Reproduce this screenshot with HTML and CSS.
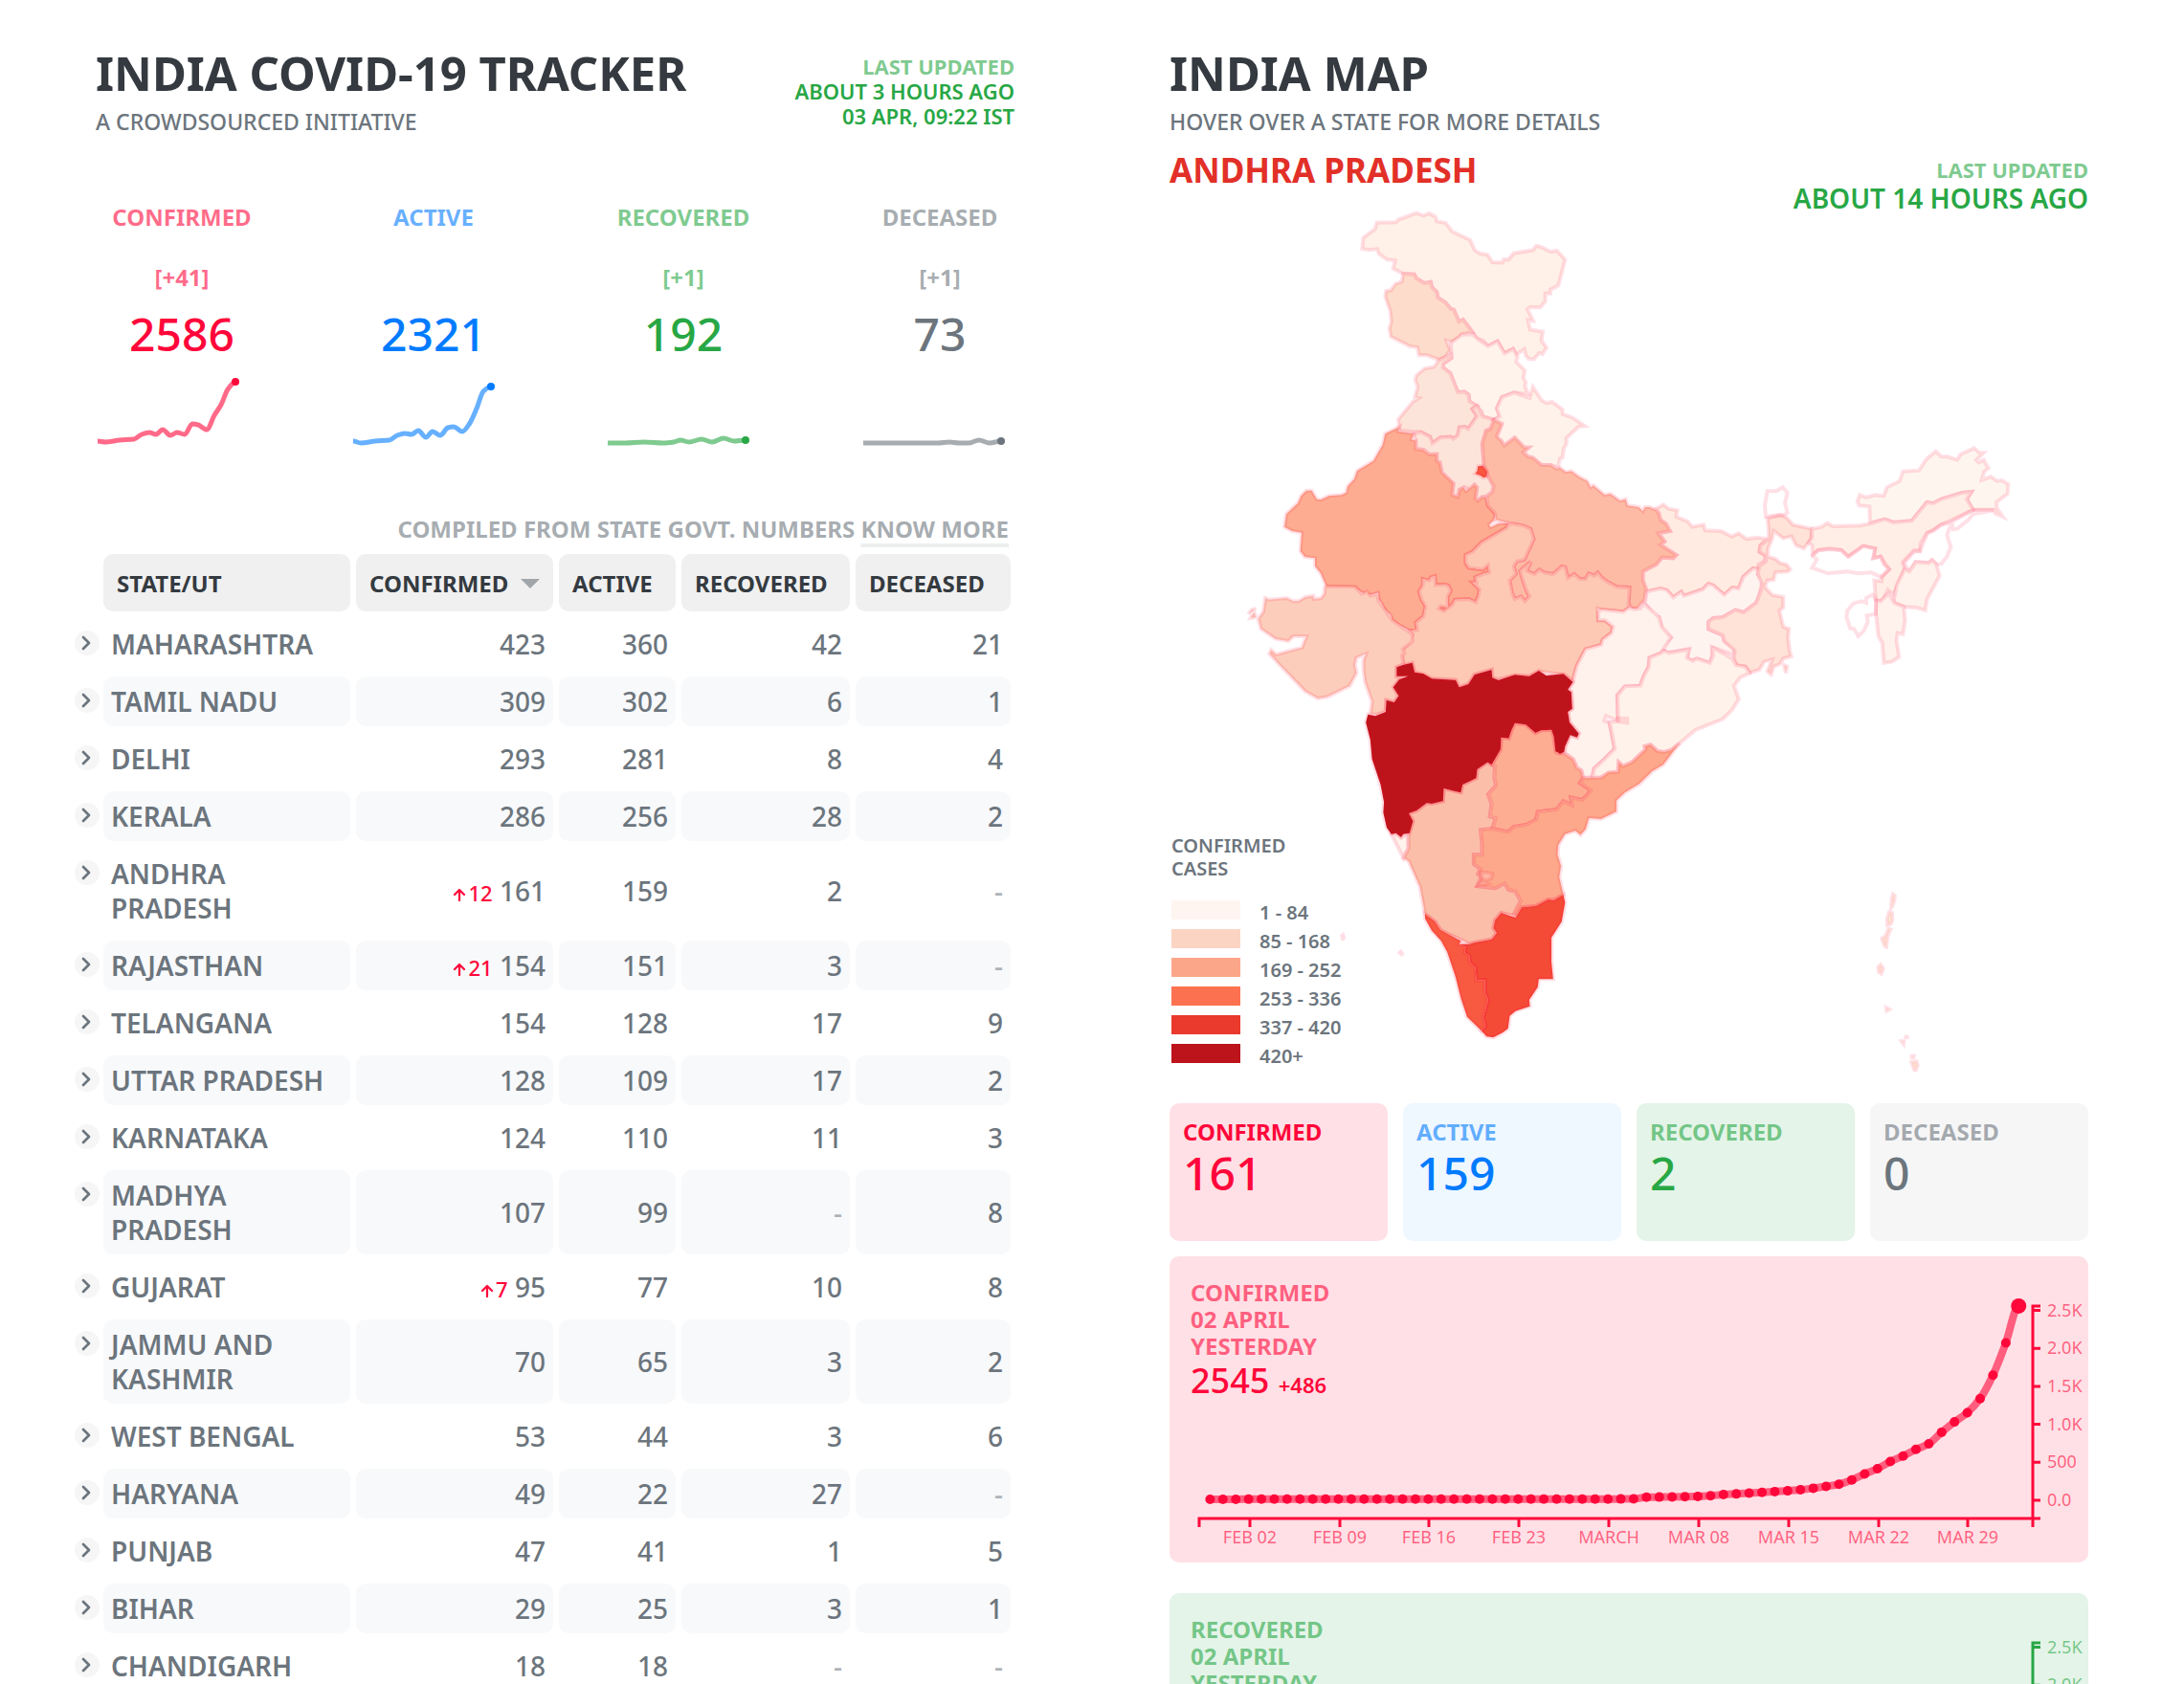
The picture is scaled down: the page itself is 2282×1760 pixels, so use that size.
FILE: index.html
```html
<!DOCTYPE html>
<html lang="en">
<head>
<meta charset="utf-8">
<title>India COVID-19 Tracker</title>
<link rel="stylesheet" href="styles.css">
</head>
<body>
<svg class="symbols" aria-hidden="true">
  <symbol id="chevron" viewBox="0 0 26 26"><path d="M9 7l6 6-6 6" fill="none" stroke="#6c757d" stroke-width="2.7" stroke-linecap="round" stroke-linejoin="round"/></symbol>
  <symbol id="up" viewBox="0 0 14 14"><path d="M7 13V2M2 7l5-5 5 5" fill="none" stroke="#ff073a" stroke-width="2.2" stroke-linecap="round" stroke-linejoin="round"/></symbol>
</svg>
<main class="page">
  <section class="column">
    <header class="head">
      <div>
        <h1 class="title">INDIA COVID-19 TRACKER</h1>
        <p class="subtitle">A CROWDSOURCED INITIATIVE</p>
      </div>
      <div class="updated">
        <p class="updated-label">LAST UPDATED</p>
        <p>ABOUT 3 HOURS AGO</p>
        <p>03 APR, 09:22 IST</p>
      </div>
    </header>

    <div class="stats">
      <div class="stat red"><h2 class="stat-label">CONFIRMED</h2><p class="stat-delta">[+41]</p><p class="stat-value">2586</p></div>
      <div class="stat blue"><h2 class="stat-label">ACTIVE</h2><p class="stat-delta"></p><p class="stat-value">2321</p></div>
      <div class="stat green"><h2 class="stat-label">RECOVERED</h2><p class="stat-delta">[+1]</p><p class="stat-value">192</p></div>
      <div class="stat gray"><h2 class="stat-label">DECEASED</h2><p class="stat-delta">[+1]</p><p class="stat-value">73</p></div>
    </div>

    <div class="sparks">
      <svg class="spark red" viewBox="0 0 160 90" data-points="2,76 10,77 25,75 40,74 48,69 56,67 63,69 70,64 78,70 85,67 93,69 101,58 107,59 116,64 124,49 131,38 138,22 146,14"></svg>
      <svg class="spark blue" viewBox="0 0 160 90" data-points="2,76 10,78 25,76 40,75 48,70 56,68 63,69 70,65 78,72 85,66 93,70 101,62 107,61 116,66 124,57 131,42 138,24 146,19"></svg>
      <svg class="spark green" viewBox="0 0 160 90" data-points="2,78 20,78 40,77 60,78 71,77 78,75 87,77 100,74 111,77 123,73 134,76 146,75"></svg>
      <svg class="spark gray" viewBox="0 0 160 90" data-points="2,78 30,78 60,78 80,78 92,77 102,78 112,78 123,75 134,78 146,76"></svg>
    </div>

    <p class="note">COMPILED FROM STATE GOVT. NUMBERS <a href="#sources">KNOW MORE</a></p>

    <table class="states">
      <colgroup><col class="c-toggle"><col><col class="c-confirmed"><col class="c-active"><col class="c-recovered"><col class="c-deceased"></colgroup>
      <thead>
        <tr><td></td><th scope="col"><button>STATE/UT</button></th><th scope="col"><button>CONFIRMED<span class="sort"></span></button></th><th scope="col"><button>ACTIVE</button></th><th scope="col"><button>RECOVERED</button></th><th scope="col"><button>DECEASED</button></th></tr>
      </thead>
      <tbody>
        <tr><td class="toggle"><button aria-label="Show districts"><svg><use href="#chevron"/></svg></button></td><th scope="row">MAHARASHTRA</th><td>423</td><td>360</td><td>42</td><td>21</td></tr>
        <tr><td class="toggle"><button aria-label="Show districts"><svg><use href="#chevron"/></svg></button></td><th scope="row">TAMIL NADU</th><td>309</td><td>302</td><td>6</td><td>1</td></tr>
        <tr><td class="toggle"><button aria-label="Show districts"><svg><use href="#chevron"/></svg></button></td><th scope="row">DELHI</th><td>293</td><td>281</td><td>8</td><td>4</td></tr>
        <tr><td class="toggle"><button aria-label="Show districts"><svg><use href="#chevron"/></svg></button></td><th scope="row">KERALA</th><td>286</td><td>256</td><td>28</td><td>2</td></tr>
        <tr><td class="toggle"><button aria-label="Show districts"><svg><use href="#chevron"/></svg></button></td><th scope="row">ANDHRA PRADESH</th><td><span class="rise"><svg><use href="#up"/></svg>12</span> 161</td><td>159</td><td>2</td><td class="none">-</td></tr>
        <tr><td class="toggle"><button aria-label="Show districts"><svg><use href="#chevron"/></svg></button></td><th scope="row">RAJASTHAN</th><td><span class="rise"><svg><use href="#up"/></svg>21</span> 154</td><td>151</td><td>3</td><td class="none">-</td></tr>
        <tr><td class="toggle"><button aria-label="Show districts"><svg><use href="#chevron"/></svg></button></td><th scope="row">TELANGANA</th><td>154</td><td>128</td><td>17</td><td>9</td></tr>
        <tr><td class="toggle"><button aria-label="Show districts"><svg><use href="#chevron"/></svg></button></td><th scope="row">UTTAR PRADESH</th><td>128</td><td>109</td><td>17</td><td>2</td></tr>
        <tr><td class="toggle"><button aria-label="Show districts"><svg><use href="#chevron"/></svg></button></td><th scope="row">KARNATAKA</th><td>124</td><td>110</td><td>11</td><td>3</td></tr>
        <tr><td class="toggle"><button aria-label="Show districts"><svg><use href="#chevron"/></svg></button></td><th scope="row">MADHYA PRADESH</th><td>107</td><td>99</td><td class="none">-</td><td>8</td></tr>
        <tr><td class="toggle"><button aria-label="Show districts"><svg><use href="#chevron"/></svg></button></td><th scope="row">GUJARAT</th><td><span class="rise"><svg><use href="#up"/></svg>7</span> 95</td><td>77</td><td>10</td><td>8</td></tr>
        <tr><td class="toggle"><button aria-label="Show districts"><svg><use href="#chevron"/></svg></button></td><th scope="row">JAMMU AND KASHMIR</th><td>70</td><td>65</td><td>3</td><td>2</td></tr>
        <tr><td class="toggle"><button aria-label="Show districts"><svg><use href="#chevron"/></svg></button></td><th scope="row">WEST BENGAL</th><td>53</td><td>44</td><td>3</td><td>6</td></tr>
        <tr><td class="toggle"><button aria-label="Show districts"><svg><use href="#chevron"/></svg></button></td><th scope="row">HARYANA</th><td>49</td><td>22</td><td>27</td><td class="none">-</td></tr>
        <tr><td class="toggle"><button aria-label="Show districts"><svg><use href="#chevron"/></svg></button></td><th scope="row">PUNJAB</th><td>47</td><td>41</td><td>1</td><td>5</td></tr>
        <tr><td class="toggle"><button aria-label="Show districts"><svg><use href="#chevron"/></svg></button></td><th scope="row">BIHAR</th><td>29</td><td>25</td><td>3</td><td>1</td></tr>
        <tr><td class="toggle"><button aria-label="Show districts"><svg><use href="#chevron"/></svg></button></td><th scope="row">CHANDIGARH</th><td>18</td><td>18</td><td class="none">-</td><td class="none">-</td></tr>
      </tbody>
    </table>
  </section>

  <section class="column">
    <header class="head">
      <div>
        <h1 class="title">INDIA MAP</h1>
        <p class="subtitle">HOVER OVER A STATE FOR MORE DETAILS</p>
      </div>
    </header>
    <div class="map-head">
      <h2 class="state-name">ANDHRA PRADESH</h2>
      <div class="map-updated">
        <p class="updated-label">LAST UPDATED</p>
        <p class="map-time">ABOUT 14 HOURS AGO</p>
      </div>
    </div>

    <div class="map">
      <svg class="map-svg" viewBox="-174 60 2880 2730" role="img" aria-label="Confirmed cases by state">
        <g class="northeast" transform="translate(1260 720)">
          <path fill="#ffebe1" d="M90,275 115,262 130,275 158,280 155,300 190,315 205,332 240,325 245,343 295,345 328,362 350,352 375,370 410,365 438,370 418,390 415,410 435,422 430,440 412,450 412,465 395,462 365,488 350,525 330,522 305,545 270,515 255,510 238,528 178,548 170,535 145,553 125,530 105,525 62,535 50,500 50,472 92,450 110,428 145,430 155,420 105,388 118,378 98,352 135,345 122,322 105,310 100,290Z"/>
          <path fill="#fff3ef" d="M62,535 105,525 125,530 145,553 170,535 178,548 238,528 255,510 270,515 305,545 330,522 350,525 365,488 395,462 412,465 410,480 425,500 415,545 405,570 365,600 340,592 300,615 270,618 255,630 255,652 300,672 305,690 335,712 338,735 270,710 262,760 220,745 200,752 188,742 193,715 130,727 105,715 137,680 110,655 100,615 88,615 55,570 60,550Z"/>
          <path fill="#ffe2d8" d="M440,305 480,295 500,302 520,325 578,338 578,370 568,382 555,400 530,390 515,362 490,368 460,345 455,370 442,400 442,425 465,432 480,445 500,450 512,465 505,472 465,475 460,498 440,500 432,520 455,545 490,552 490,585 478,595 490,645 508,652 505,680 510,720 515,738 490,745 480,762 460,770 452,795 440,785 455,748 430,755 415,780 385,790 370,770 345,768 335,745 338,720 305,690 300,672 255,652 255,630 270,618 300,615 340,592 365,600 405,570 415,545 425,515 410,480 415,455 435,440 435,422 415,410 418,390 445,370 443,330ZM492,765 502,770 498,790Z"/>
          <path fill="none" d="M440,220 468,220 488,208 503,225 495,258 503,288 490,295 475,295 435,300 432,265Z"/>
          <path fill="#fff5ef" d="M730,232 750,240 778,232 805,235 815,208 855,188 865,158 915,155 940,118 968,95 985,112 1005,112 1035,122 1045,105 1088,85 1105,100 1118,100 1095,122 1103,130 1118,122 1133,148 1120,158 1112,185 1140,175 1160,188 1175,186 1195,198 1193,228 1158,255 1160,275 1178,300 1155,290 1150,278 1085,278 1065,245 1080,222 1050,225 985,245 960,258 940,255 893,313 835,318 808,308 762,320 760,268 728,265 722,252Z"/>
          <path fill="#ffeee6" d="M580,338 610,332 628,320 645,330 730,328 762,322 808,308 835,318 893,313 940,255 960,258 985,245 1050,225 1080,222 1065,245 1085,278 1015,312 985,325 960,345 940,350 920,385 918,408 900,405 865,442 870,465 855,500 835,545 818,530 800,565 780,562 775,500 798,502 798,488 822,465 805,450 795,425 772,430 778,400 740,392 730,400 695,425 672,405 635,400 600,405 582,420 580,390 570,382 580,365Z"/>
          <path fill="none" d="M1018,315 1022,340 1035,338 1070,310 1085,292 1150,280 1085,280ZM1018,318 1003,358 1015,395 1003,425 985,448 970,450 955,435 945,445 905,442 885,472 868,445 900,410 918,408 942,352 985,325Z"/>
          <path fill="#fff1eb" d="M885,472 905,442 945,445 957,437 970,450 980,485 940,560 935,593 905,585 870,583 835,570 845,515 870,465Z"/>
          <path fill="#fff1ec" d="M795,565 820,540 838,570 868,583 872,625 865,668 848,665 845,690 853,740 830,755 805,758 800,695 788,675 780,600 782,565Z"/>
          <path fill="none" d="M780,560 770,545 750,555 750,570 735,565 710,572 690,595 688,615 700,650 712,652 725,675 742,658 755,630 752,610 780,605Z"/>
          <path fill="none" d="M582,420 600,405 635,402 672,405 692,425 740,392 778,400 772,430 795,425 822,465 798,490 765,475 725,478 690,472 630,478 580,460 595,435Z"/>
        </g>
        <g class="north">
          <path fill="#fff0e8" d="M433,146 470,118 476,98 535,97 545,88 600,68 622,76 640,69 660,80 664,94 692,99 712,126 768,152 783,185 800,195 823,199 838,222 870,223 874,213 888,214 905,194 965,184 976,171 990,174 1020,189 1040,186 1066,214 1045,295 1020,308 1020,320 1004,320 1004,345 988,364 957,363 948,370 966,406 950,404 956,433 996,440 992,468 1008,490 995,510 985,507 968,526 952,525 943,515 938,495 912,512 903,494 876,508 854,470 824,485 808,467 790,462 776,442 746,402 733,408 717,371 708,369 690,348 667,333 664,316 648,300 645,284 625,288 600,273 593,260 558,258 527,242 533,217 508,214 482,196 477,181 452,184 430,180Z"/>
          <path fill="#fddccc" d="M558,258 593,260 600,273 625,288 645,284 648,300 664,316 667,333 690,348 708,369 717,371 733,408 746,402 776,442 742,447 733,460 712,472 694,468 706,498 690,520 670,528 632,514 608,514 603,489 580,486 520,456 515,430 521,410 518,375 502,330 505,312 520,310 534,290 554,283Z"/>
          <path fill="#fff3ec" d="M742,450 776,448 790,462 824,485 854,470 876,508 903,494 917,520 913,535 940,562 935,583 943,600 940,610 950,635 906,631 868,645 852,680 861,706 843,716 808,706 805,690 785,672 766,658 764,638 750,628 730,630 706,570 683,552 684,540 710,522 708,478 712,472Z"/>
          <path fill="#fde4da" d="M670,530 708,510 710,522 684,540 683,552 706,570 730,630 750,628 764,638 766,658 790,672 775,682 790,705 762,745 752,738 735,740 730,765 715,776 708,770 675,772 650,790 643,770 615,755 547,750 543,715 588,660 607,648 595,645 604,613 596,590 600,577 625,556 655,550Z"/>
          <path fill="#fde4da" d="M592,760 615,755 643,770 650,790 675,772 708,770 715,776 730,765 735,740 752,738 762,745 790,705 775,682 790,672 808,706 843,716 832,745 818,750 806,792 812,860 822,878 826,895 842,925 838,942 820,955 806,958 793,970 785,962 790,928 782,920 766,940 755,928 748,928 735,935 730,958 712,952 716,918 680,882 673,848 664,845 664,824 640,825 624,810 598,808 598,782Z"/>
          <path fill="#fff2ea" d="M843,716 861,706 852,680 868,645 906,631 955,648 965,613 992,655 1008,664 1025,660 1058,684 1058,698 1090,710 1128,736 1108,738 1070,773 1070,792 1062,805 1058,835 1050,838 1044,865 1020,858 992,858 965,835 950,832 935,818 952,803 938,803 908,772 875,797 866,782 855,780 852,768 868,728Z"/>
          <path fill="#fdac91" d="M547,738 543,753 592,760 585,778 598,782 598,808 620,810 640,825 664,824 664,845 673,850 680,882 716,915 712,952 730,958 735,935 748,928 755,940 782,920 790,928 785,962 793,970 806,958 818,960 824,985 848,1012 842,1033 828,1045 833,1053 856,1042 890,1040 882,1055 805,1100 775,1130 754,1140 754,1165 764,1180 808,1186 824,1172 828,1195 812,1198 784,1210 788,1226 775,1226 798,1248 794,1268 786,1288 764,1278 720,1280 712,1296 686,1316 670,1308 676,1300 698,1304 698,1270 708,1252 700,1236 688,1232 660,1234 658,1206 645,1210 640,1220 620,1215 620,1235 608,1255 616,1280 628,1300 622,1332 598,1352 602,1375 580,1378 550,1362 524,1345 520,1330 500,1310 490,1290 482,1280 480,1258 455,1266 428,1258 408,1242 318,1240 300,1198 282,1175 282,1150 250,1146 236,1128 240,1070 210,1065 186,1052 192,1012 228,978 238,955 255,938 272,938 288,965 300,967 325,955 365,952 380,944 384,925 405,902 414,876 465,845 494,795 502,760Z"/>
          <path fill="#fdbba5" d="M843,716 868,730 852,768 866,782 875,797 908,772 938,803 952,803 935,818 950,832 965,835 992,858 1020,858 1040,870 1050,866 1068,880 1086,877 1110,895 1136,908 1146,928 1155,922 1190,952 1208,948 1238,970 1256,965 1262,985 1297,990 1310,1003 1316,990 1332,990 1352,1000 1360,1010 1365,1030 1382,1042 1395,1065 1358,1072 1378,1098 1365,1108 1415,1140 1405,1150 1370,1148 1352,1170 1310,1192 1310,1220 1320,1245 1315,1280 1292,1308 1278,1308 1265,1295 1268,1242 1228,1240 1195,1222 1180,1210 1168,1195 1158,1205 1140,1198 1130,1215 1112,1215 1095,1200 1075,1212 1066,1178 1056,1176 1028,1200 1000,1195 985,1186 970,1200 946,1190 958,1162 935,1180 925,1190 932,1215 942,1245 954,1270 940,1285 928,1270 908,1278 900,1260 892,1220 912,1200 905,1175 915,1160 938,1155 968,1090 958,1058 935,1048 900,1042 848,1030 848,1012 824,985 820,958 838,942 842,925 826,895 812,860 806,792 818,750 832,745Z"/>
          <path fill="#fdc9b4" d="M890,1045 900,1042 935,1048 958,1058 968,1090 938,1155 915,1160 905,1175 912,1200 892,1220 900,1260 908,1278 928,1270 940,1285 954,1270 942,1245 932,1215 925,1190 935,1180 958,1162 946,1190 970,1200 985,1186 1000,1195 1028,1200 1056,1176 1066,1178 1075,1212 1095,1200 1112,1215 1130,1215 1140,1198 1158,1205 1168,1195 1180,1210 1195,1222 1228,1240 1268,1242 1265,1295 1268,1304 1250,1318 1179,1311 1168,1308 1170,1345 1190,1345 1216,1365 1211,1385 1184,1405 1179,1422 1130,1435 1104,1485 1095,1515 1091,1535 1061,1515 984,1505 954,1520 909,1518 857,1530 836,1525 836,1500 782,1515 763,1545 734,1555 723,1532 648,1528 595,1508 587,1480 560,1487 552,1440 579,1412 587,1390 580,1378 602,1375 598,1352 622,1332 628,1300 616,1280 608,1255 620,1235 620,1215 640,1220 645,1210 658,1206 660,1234 688,1232 700,1236 708,1252 698,1270 698,1304 676,1300 670,1308 686,1316 712,1296 720,1280 764,1278 786,1288 794,1268 798,1248 775,1226 788,1226 784,1210 812,1198 828,1195 824,1172 808,1186 764,1180 754,1165 754,1140 775,1130 805,1100 882,1055Z"/>
          <path fill="#f85740" d="M793,862 808,860 822,878 820,895 810,898 802,892 784,885 790,878Z"/>
        </g>
        <g class="south" transform="translate(0 1200) scale(1.0714 1)">
          <path fill="#fff1eb" d="M1182,105 1165,118 1100,111 1092,120 1092,145 1112,145 1135,165 1130,185 1105,205 1100,222 1055,235 1030,285 1022,315 1018,338 1003,362 1013,370 1016,422 1003,432 1008,465 1035,500 1030,512 1010,505 995,540 992,560 1018,580 1030,608 1042,615 1048,640 1075,635 1080,610 1110,580 1140,548 1130,490 1125,465 1110,460 1115,445 1150,460 1148,380 1170,352 1215,350 1225,320 1240,290 1242,262 1275,248 1305,198 1278,165 1270,135 1225,92 1215,108 1198,110Z"/>
          <path fill="#fff2ea" d="M1283,240 1300,247 1358,236 1352,262 1368,272 1380,265 1418,278 1428,255 1425,230 1460,250 1484,265 1495,285 1522,290 1535,310 1507,325 1489,350 1503,392 1484,425 1456,455 1377,488 1330,530 1305,552 1285,558 1265,555 1245,535 1228,540 1230,550 1205,575 1190,590 1165,602 1152,590 1150,620 1122,622 1100,638 1075,635 1080,610 1110,580 1140,548 1130,490 1125,465 1150,460 1148,380 1170,352 1215,350 1225,320 1240,290 1242,262 1275,248Z"/>
          <path fill="none" d="M1150,452 1176,453 1176,466 1150,462Z"/>
          <path fill="#fdcdbb" d="M292,42 298,38 380,40 400,62 415,55 425,68 445,62 450,85 470,115 490,145 515,165 540,182 548,190 548,212 520,235 525,250 518,255 522,282 502,292 502,320 530,318 510,330 495,355 508,382 495,402 472,395 470,430 445,440 425,438 430,400 410,340 405,300 405,270 412,250 385,262 380,285 385,310 365,350 300,385 272,390 235,368 160,285 130,250 135,238 150,252 225,230 238,195 200,195 185,210 148,203 105,172 97,140 112,118 118,75 128,80 180,75 200,85 215,85 235,72 258,68 260,78 280,76 290,62ZM68,125 78,112 90,108ZM75,138 85,120 90,135Z"/>
          <path fill="#fff3ec" d="M487,816 500,812 515,825 535,815 537,860 522,890Z"/>
          <path fill="#fbbfa9" d="M537,815 550,775 538,750 560,742 590,718 605,720 638,712 640,672 670,680 690,685 695,660 715,650 735,640 738,612 768,590 790,602 788,640 793,662 770,690 780,720 775,760 792,765 782,798 748,802 752,845 752,880 728,880 728,910 748,925 740,940 750,950 738,978 790,985 818,970 830,990 850,995 865,1025 845,1070 808,1062 790,1085 785,1110 795,1125 780,1145 730,1155 715,1160 680,1140 655,1130 630,1115 615,1090 585,1065 570,980 537,900 522,890 537,860Z"/>
          <path fill="#fdad92" d="M848,467 880,472 908,498 925,490 955,488 962,510 970,560 992,562 1018,580 1030,608 1042,615 1048,640 1038,655 1070,678 1060,692 1045,708 1012,700 1015,725 990,712 970,738 915,745 910,770 882,785 845,792 828,808 782,798 792,765 775,760 780,720 770,690 793,662 788,640 790,602 780,598 806,550 808,512 830,515 838,490Z"/>
          <path fill="#fda88b" d="M748,802 782,798 828,808 845,792 882,785 910,770 915,745 970,738 990,712 1015,725 1012,700 1045,708 1060,692 1070,678 1038,655 1048,640 1100,638 1122,622 1150,620 1152,590 1165,602 1190,590 1205,575 1230,550 1228,540 1245,535 1265,555 1285,558 1305,552 1330,530 1282,598 1250,618 1212,658 1170,685 1145,710 1145,745 1100,768 1065,765 1055,800 1040,818 1025,805 995,815 975,850 973,880 983,915 978,950 990,1005 962,1022 945,1020 910,1040 868,1045 850,1075 845,1065 865,1025 850,995 830,990 818,970 790,985 738,978 750,950 740,940 748,925 728,910 728,880 752,880 752,845Z"/>
          <path fill="#fcb8a2" d="M748,935 765,935 782,940 778,955 762,962 750,950ZM742,975 752,962 768,970Z"/>
          <path fill="#f44b37" d="M990,1005 995,1030 985,1090 955,1140 955,1215 960,1270 918,1270 915,1295 890,1335 892,1355 850,1370 833,1385 828,1425 812,1438 785,1453 765,1450 750,1432 762,1418 755,1390 770,1335 760,1310 760,1272 735,1275 733,1235 715,1215 715,1198 700,1185 705,1170 685,1160 715,1160 730,1155 780,1145 795,1125 785,1110 790,1085 808,1062 850,1077 868,1045 910,1040 945,1020 962,1022Z"/>
          <path fill="#f85a41" d="M585,1065 615,1090 630,1115 655,1130 690,1150 685,1160 705,1170 700,1185 715,1198 715,1215 733,1235 735,1275 760,1272 760,1310 770,1335 755,1390 762,1418 750,1432 708,1388 690,1330 675,1265 650,1185 632,1150 605,1118 585,1080Z"/>
          <path fill="#bc141a" d="M502,292 520,285 548,278 555,308 580,312 605,328 675,332 685,355 712,345 730,315 780,300 782,325 800,332 848,316 890,320 918,303 940,318 990,313 1018,338 1003,362 1013,370 1016,422 1003,432 1008,465 1035,500 1030,512 1010,505 995,540 992,558 980,563 967,556 962,510 955,488 925,490 908,498 880,472 848,467 838,490 830,515 808,512 806,550 780,598 768,590 738,612 735,640 715,650 695,660 690,685 670,680 640,672 638,712 605,720 590,718 560,742 538,750 550,775 540,812 522,815 515,825 500,812 487,816 473,795 463,748 465,715 455,660 430,580 425,520 412,465 418,440 440,445 470,432 472,395 495,402 508,382 492,355 510,330 535,320 502,320Z"/>
        </g>
        <g class="islands" fill="#fff3e0">
          <path transform="translate(1680 2100)" d="M414,104 419,108 418,125 411,142 408,146 410,118ZM402,160 411,162 412,185 406,198 396,200 396,180ZM400,212 406,214 402,222 396,240 393,268 388,266 379,243 390,235ZM375,325 383,336 377,353 370,349 367,333ZM393,460 402,465 394,469ZM457,546 458,552 455,552ZM441,565 448,565 447,573ZM473,611 479,611 478,616 473,616ZM472,631 487,628 491,640 485,655 481,655Z"/>
          <path stroke="none" fill="#ffdfe5" d="M360,2332 372,2322 379,2340 373,2349 364,2349ZM539,2388 552,2375 563,2392 553,2400Z"/>
        </g>
      </svg>
      <div class="legend">
        <p class="legend-title">CONFIRMED CASES</p>
        <ul class="legend-list">
          <li><span class="swatch s1"></span>1 - 84</li>
          <li><span class="swatch s2"></span>85 - 168</li>
          <li><span class="swatch s3"></span>169 - 252</li>
          <li><span class="swatch s4"></span>253 - 336</li>
          <li><span class="swatch s5"></span>337 - 420</li>
          <li><span class="swatch s6"></span>420+</li>
        </ul>
      </div>
    </div>

    <div class="cards">
      <div class="card red solid"><h3 class="card-label">CONFIRMED</h3><p class="card-value">161</p></div>
      <div class="card blue"><h3 class="card-label">ACTIVE</h3><p class="card-value">159</p></div>
      <div class="card green"><h3 class="card-label">RECOVERED</h3><p class="card-value">2</p></div>
      <div class="card gray"><h3 class="card-label">DECEASED</h3><p class="card-value">0</p></div>
    </div>

    <article class="chart red">
      <svg class="chart-svg" viewBox="0 0 960 320" data-series="confirmed"></svg>
      <h3 class="chart-title">CONFIRMED<br>02 APRIL<br>YESTERDAY</h3>
      <p class="chart-value">2545 <small>+486</small></p>
    </article>
    <article class="chart green">
      <svg class="chart-svg" viewBox="0 0 960 320" data-series="recovered"></svg>
      <h3 class="chart-title">RECOVERED<br>02 APRIL<br>YESTERDAY</h3>
      <p class="chart-value">191 <small>+22</small></p>
    </article>
  </section>
</main>
<script src="charts.js"></script>
</body>
</html>
```
FILE: styles.css
```css
* { box-sizing: border-box; }
body, h1, h2, h3, p, ul { margin: 0; padding: 0; }
body {
  background: #fff;
  color: #6c757d;
  font-family: "Noto Sans", "Open Sans", sans-serif;
  font-weight: 600;
}
button {
  border: 0;
  padding: 0;
  background: none;
  color: inherit;
  font: inherit;
  cursor: pointer;
}
.symbols { display: none; }

.red { --full: #ff073a; --soft: #ff073a99; --bg: #ff073a20; }
.blue { --full: #007bff; --soft: #007bff99; --bg: #007bff10; }
.green { --full: #28a745; --soft: #28a74599; --bg: #28a74520; }
.gray { --full: #6c757d; --soft: #6c757d99; --bg: #6c757d10; }

.page {
  display: grid;
  grid-template-columns: minmax(0, 1fr) minmax(0, 1fr);
  gap: 162px;
  align-items: start;
  height: 100vh;
  padding: 46px 100px 0;
  overflow-y: auto;
  scrollbar-width: none;
}

.head { display: flex; justify-content: space-between; }
.title { color: #343a40; font-size: 49px; line-height: 60px; font-weight: 700; }
.subtitle { margin-top: 6px; font-size: 23px; line-height: 30px; font-weight: 500; }
.updated { padding-top: 10px; color: #28a745; font-size: 22px; line-height: 26px; text-align: right; }
.updated-label { color: #28a74599; font-size: 22px; font-weight: 700; }

.stats {
  display: grid;
  grid-template-columns: 180px 142px 176px 156px;
  justify-content: space-between;
  margin-top: 70px;
  text-align: center;
}
.stat-label { color: var(--soft); font-size: 24px; line-height: 30px; font-weight: 700; }
.stat-delta { height: 30px; margin-top: 33px; color: var(--soft); font-size: 24px; line-height: 30px; font-weight: 700; }
.stat-value { margin-top: 14px; color: var(--full); font-size: 48px; line-height: 60px; font-weight: 500; }

.sparks { display: flex; justify-content: space-between; margin-top: 6px; }
.spark { width: 160px; height: 90px; }
.spark path { fill: none; stroke: var(--soft); stroke-width: 5; }
.spark circle { fill: var(--full); }

.note {
  margin-top: 63px;
  padding-right: 6px;
  color: #6c757d99;
  font-size: 24px;
  line-height: 30px;
  font-weight: 700;
  text-align: right;
}
.note a {
  color: inherit;
  text-decoration: underline 4px #6c757d20;
  text-decoration-skip-ink: none;
  text-underline-offset: 6px;
}

.states {
  width: calc(100% + 32px);
  margin: 3px -2px 0 -30px;
  border-spacing: 6px 8px;
  table-layout: fixed;
}
.c-toggle { width: 26px; }
.c-confirmed { width: 206px; }
.c-active { width: 122px; }
.c-recovered { width: 176px; }
.c-deceased { width: 162px; }
.states td, .states th { padding: 8px; border-radius: 10px; font-size: 28px; line-height: 36px; }
.states thead th {
  height: 60px;
  padding: 2px 14px 0;
  background: #f0f0f1;
  color: #343a40;
  font-size: 24px;
  text-align: left;
}
.states thead button { display: flex; align-items: center; width: 100%; font-weight: 700; }
.sort {
  margin-left: auto;
  border: 10px solid transparent;
  border-top-color: #a1a6aa;
  border-bottom: 0;
}
.states tbody th { padding-right: 4px; text-align: left; font-weight: 600; }
.states tbody td { text-align: right; font-weight: 500; }
.states tbody tr:nth-child(even) > :not(.toggle) { background: #f8f9fb; }
.states tbody .toggle { padding: 12px 0 0 2px; vertical-align: top; }
.toggle button { display: block; width: 26px; height: 26px; border-radius: 50%; background: #f6f6f7; }
.toggle svg { display: block; width: 26px; height: 26px; }
.states .none { color: #adb2b7; }
.rise { color: #ff073a; font-size: 22px; line-height: 22px; }
.rise svg { width: 14px; height: 14px; margin-right: 2px; }

.map-head { display: flex; justify-content: space-between; margin-top: 15px; }
.state-name { color: #e23028; font-size: 35px; line-height: 42px; font-weight: 700; }
.map-updated { padding-top: 7px; line-height: 26px; text-align: right; }
.map-time { margin-top: 4px; color: #28a745; font-size: 28px; }
.map { position: relative; }
.map-svg { display: block; width: 100%; height: auto; stroke: #ff073a20; stroke-width: 12; }
.legend { position: absolute; left: 2px; bottom: 9px; font-size: 20px; }
.legend-title { width: 140px; line-height: 24px; }
.legend-list { margin-top: 21px; list-style: none; }
.legend-list li { display: flex; align-items: flex-start; height: 30px; line-height: 26px; gap: 20px; }
.swatch { width: 72px; height: 20px; }
.s1 { background: #fff5f0; }
.s2 { background: #fcd4c4; }
.s3 { background: #fca689; }
.s4 { background: #fc7251; }
.s5 { background: #ea392d; }
.s6 { background: #bc141a; }

.cards { display: grid; grid-template-columns: repeat(4, 1fr); gap: 16px; margin-top: 23px; }
.card { min-height: 144px; padding: 16px 14px; border-radius: 10px; background: var(--bg); }
.card-label { color: var(--soft); font-size: 24px; line-height: 28px; font-weight: 700; }
.solid .card-label { color: var(--full); }
.card-value { margin-top: 3px; color: var(--full); font-size: 48px; line-height: 52px; font-weight: 500; }

.chart { position: relative; min-height: 320px; padding: 24px 22px; border-radius: 10px; background: var(--bg); }
.cards + .chart { margin-top: 16px; }
.chart + .chart { margin-top: 32px; }
.chart-title { color: var(--soft); font-size: 24px; line-height: 28px; font-weight: 700; }
.chart-value { color: var(--full); font-size: 36px; line-height: 44px; font-weight: 500; }
.chart-value small { font-size: 22px; font-weight: 600; }
.chart-svg { position: absolute; inset: 0; width: 100%; height: 100%; }
.chart-svg text { fill: var(--soft); font-size: 18px; font-weight: 400; }
.axis { fill: none; stroke: var(--full); stroke-width: 3; }
.line { fill: none; stroke: var(--soft); stroke-width: 8; }
.dot { fill: var(--full); }
```
FILE: charts.js
```js
const SERIES = {
  confirmed: [1,1,1,2,3,3,3,3,3,3,3,3,3,3,3,3,3,3,3,3,3,3,3,3,3,3,3,3,3,3,3,3,5,6,28,30,31,34,39,48,63,71,81,91,102,112,126,146,171,198,256,334,403,497,571,657,730,883,1019,1139,1326,1635,2059,2545],
  recovered: [0,0,0,0,0,0,0,0,0,0,0,0,0,0,1,2,3,3,3,3,3,3,3,3,3,3,3,3,3,3,3,3,3,3,3,3,3,3,3,3,4,4,4,10,10,13,14,15,15,20,23,23,23,25,40,43,50,75,85,102,137,150,169,191]
};
const X_TICKS = [[84,"FEB 02"],[178,"FEB 09"],[271,"FEB 16"],[365,"FEB 23"],[459,"MARCH"],[553,"MAR 08"],[647,"MAR 15"],[741,"MAR 22"],[834,"MAR 29"]];
const Y_TICKS = [[2500,"2.5K"],[2000,"2.0K"],[1500,"1.5K"],[1000,"1.0K"],[500,"500"],[0,"0.0"]];
const yOf = v => 254 - v * 0.0794;

// Smooth curve through the points, with horizontal control handles at turning points
function curve(pts) {
  const slope = pts.map((p, i) => {
    if (i === 0 || i === pts.length - 1) return 0;
    const a = (p[1] - pts[i - 1][1]) / (p[0] - pts[i - 1][0]);
    const b = (pts[i + 1][1] - p[1]) / (pts[i + 1][0] - p[0]);
    return a * b <= 0 ? 0 : 2 * a * b / (a + b);
  });
  let d = "M" + pts[0];
  for (let i = 1; i < pts.length; i++) {
    const [x0, y0] = pts[i - 1], [x1, y1] = pts[i], h = (x1 - x0) / 3;
    d += `C${x0 + h},${y0 + h * slope[i - 1]} ${x1 - h},${y1 - h * slope[i]} ${x1},${y1}`;
  }
  return d;
}

document.querySelectorAll(".spark").forEach(svg => {
  const pts = svg.dataset.points.split(" ").map(p => p.split(",").map(Number));
  const [x, y] = pts[pts.length - 1];
  svg.innerHTML = `<path d="${curve(pts)}"/><circle cx="${x}" cy="${y}" r="4"/>`;
});

document.querySelectorAll(".chart-svg").forEach(svg => {
  const values = SERIES[svg.dataset.series];
  const pts = values.map((v, i) => [42.4 + i * 13.41, yOf(v)]);
  let axis = "M31,283V274H910M902,283V52H910";
  let out = "";
  X_TICKS.forEach(([x, label]) => {
    axis += `M${x},274V283`;
    out += `<text x="${x}" y="300" text-anchor="middle">${label}</text>`;
  });
  Y_TICKS.forEach(([v, label]) => {
    axis += `M902,${yOf(v) + 1}H910`;
    out += `<text x="917" y="${yOf(v) + 7}">${label}</text>`;
  });
  out += `<path class="axis" d="${axis}"/><path class="line" d="${curve(pts)}"/>`;
  pts.forEach(([x, y], i) => {
    out += `<circle class="dot" cx="${x}" cy="${y}" r="${i === pts.length - 1 ? 8 : 5}"/>`;
  });
  svg.innerHTML = out;
});
```
